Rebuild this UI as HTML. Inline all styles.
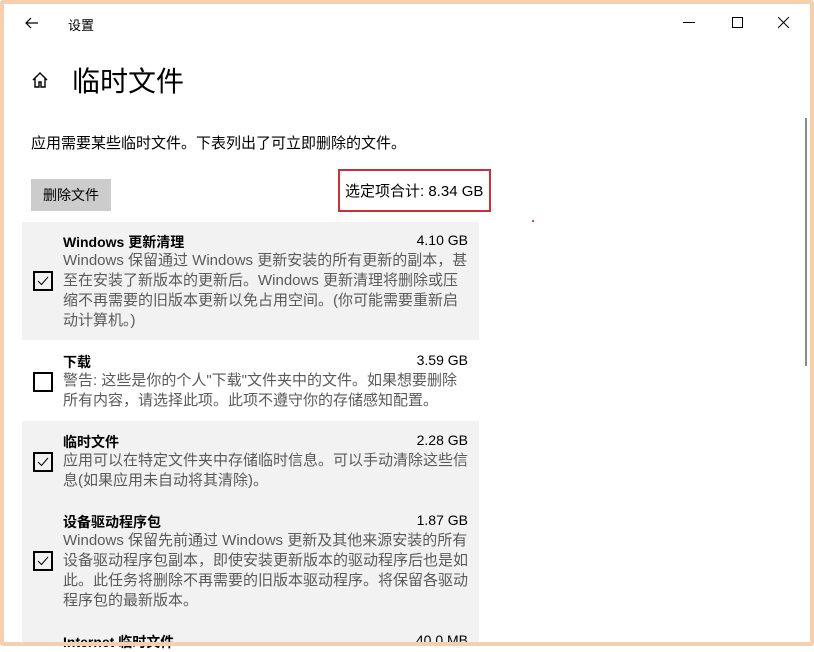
<!DOCTYPE html>
<html><head><meta charset="utf-8"><style>
*{margin:0;padding:0;box-sizing:border-box}
body{width:814px;height:646px;overflow:hidden;background:#fff;font-family:"Liberation Sans","Noto Sans CJK SC",sans-serif;position:relative}
.frame{position:absolute;left:0;top:0;width:814px;height:646px;border:4px solid #f6cfae;border-radius:3px}
.a{position:absolute;white-space:nowrap}
.t{font-size:14px;font-weight:bold;color:#000}
.d{font-size:15px;color:#5a5a5a;line-height:20px}
.s{font-size:14px;color:#000;right:346px}
.cb{position:absolute;left:33px;width:20px;height:20px;border:2px solid #000}
.bg{position:absolute;left:22px;width:457px;background:#f2f2f2}
</style></head><body>
<svg class="a" style="left:24px;top:15px" width="16" height="16" viewBox="0 0 16 16"><path d="M14 8H2M7 3L2 8l5 5" fill="none" stroke="#000" stroke-width="1.2"/></svg>
<div class="a" style="left:68px;top:15px;font-size:13px">设置</div>
<svg class="a" style="left:683px;top:22px" width="12" height="2"><rect width="12" height="1" fill="#000"/></svg>
<svg class="a" style="left:732px;top:17px" width="12" height="12"><rect x=".5" y=".5" width="10" height="10" fill="none" stroke="#000"/></svg>
<svg class="a" style="left:778px;top:17px" width="12" height="12"><path d="M0 0L11 11M11 0L0 11" stroke="#000"/></svg>
<div class="a" style="left:805px;top:118px;width:2px;height:248px;background:#8a8a8a"></div>
<svg class="a" style="left:31px;top:71px" width="18" height="18" viewBox="0 0 18 18"><path d="M2 9L9 2l7 7M4 7v9h4v-5h2v5h4V7" fill="none" stroke="#000" stroke-width="1.4"/></svg>
<div class="a" style="left:72px;top:60px;font-size:28px;color:#000">临时文件</div>
<div class="a" style="left:31px;top:132px;font-size:15px">应用需要某些临时文件。下表列出了可立即删除的文件。</div>
<div class="a" style="left:31px;top:179px;width:80px;height:32px;background:#cccccc;font-size:14px;line-height:32px;text-align:center">删除文件</div>
<div class="a" style="left:338px;top:169px;width:153px;height:43px;border:2px solid #c9303a"></div>
<div class="a" style="left:345px;top:180px;font-size:15px">选定项合计: 8.34 GB</div>
<div class="a" style="left:532px;top:220px;width:2px;height:2px;background:#d44"></div>

<div class="bg" style="top:222px;height:118px"></div>
<div class="bg" style="top:421px;height:225px"></div>

<div class="a t" style="left:63px;top:232px">Windows 更新清理</div>
<div class="a s" style="top:232px">4.10 GB</div>
<div class="a d" style="left:63px;top:251px">Windows 保留通过 Windows 更新安装的所有更新的副本，甚<br>至在安装了新版本的更新后。Windows 更新清理将删除或压<br>缩不再需要的旧版本更新以免占用空间。(你可能需要重新启<br>动计算机。)</div>
<div class="cb" style="top:271px"><svg width="16" height="16" style="position:absolute;left:0;top:0"><path d="M3 8l3.5 3.5L13 4" fill="none" stroke="#000"/></svg></div>

<div class="a t" style="left:63px;top:352px">下载</div>
<div class="a s" style="top:352px">3.59 GB</div>
<div class="a d" style="left:63px;top:371px">警告: 这些是你的个人"下载"文件夹中的文件。如果想要删除<br>所有内容，请选择此项。此项不遵守你的存储感知配置。</div>
<div class="cb" style="top:372px"></div>

<div class="a t" style="left:63px;top:432px">临时文件</div>
<div class="a s" style="top:432px">2.28 GB</div>
<div class="a d" style="left:63px;top:451px">应用可以在特定文件夹中存储临时信息。可以手动清除这些信<br>息(如果应用未自动将其清除)。</div>
<div class="cb" style="top:452px"><svg width="16" height="16" style="position:absolute;left:0;top:0"><path d="M3 8l3.5 3.5L13 4" fill="none" stroke="#000"/></svg></div>

<div class="a t" style="left:63px;top:512px">设备驱动程序包</div>
<div class="a s" style="top:512px">1.87 GB</div>
<div class="a d" style="left:63px;top:531px">Windows 保留先前通过 Windows 更新及其他来源安装的所有<br>设备驱动程序包副本，即使安装更新版本的驱动程序后也是如<br>此。此任务将删除不再需要的旧版本驱动程序。将保留各驱动<br>程序包的最新版本。</div>
<div class="cb" style="top:551px"><svg width="16" height="16" style="position:absolute;left:0;top:0"><path d="M3 8l3.5 3.5L13 4" fill="none" stroke="#000"/></svg></div>

<div class="a t" style="left:63px;top:632px">Internet 临时文件</div>
<div class="a s" style="top:632px">40.0 MB</div>
<div class="frame"></div>
</body></html>
